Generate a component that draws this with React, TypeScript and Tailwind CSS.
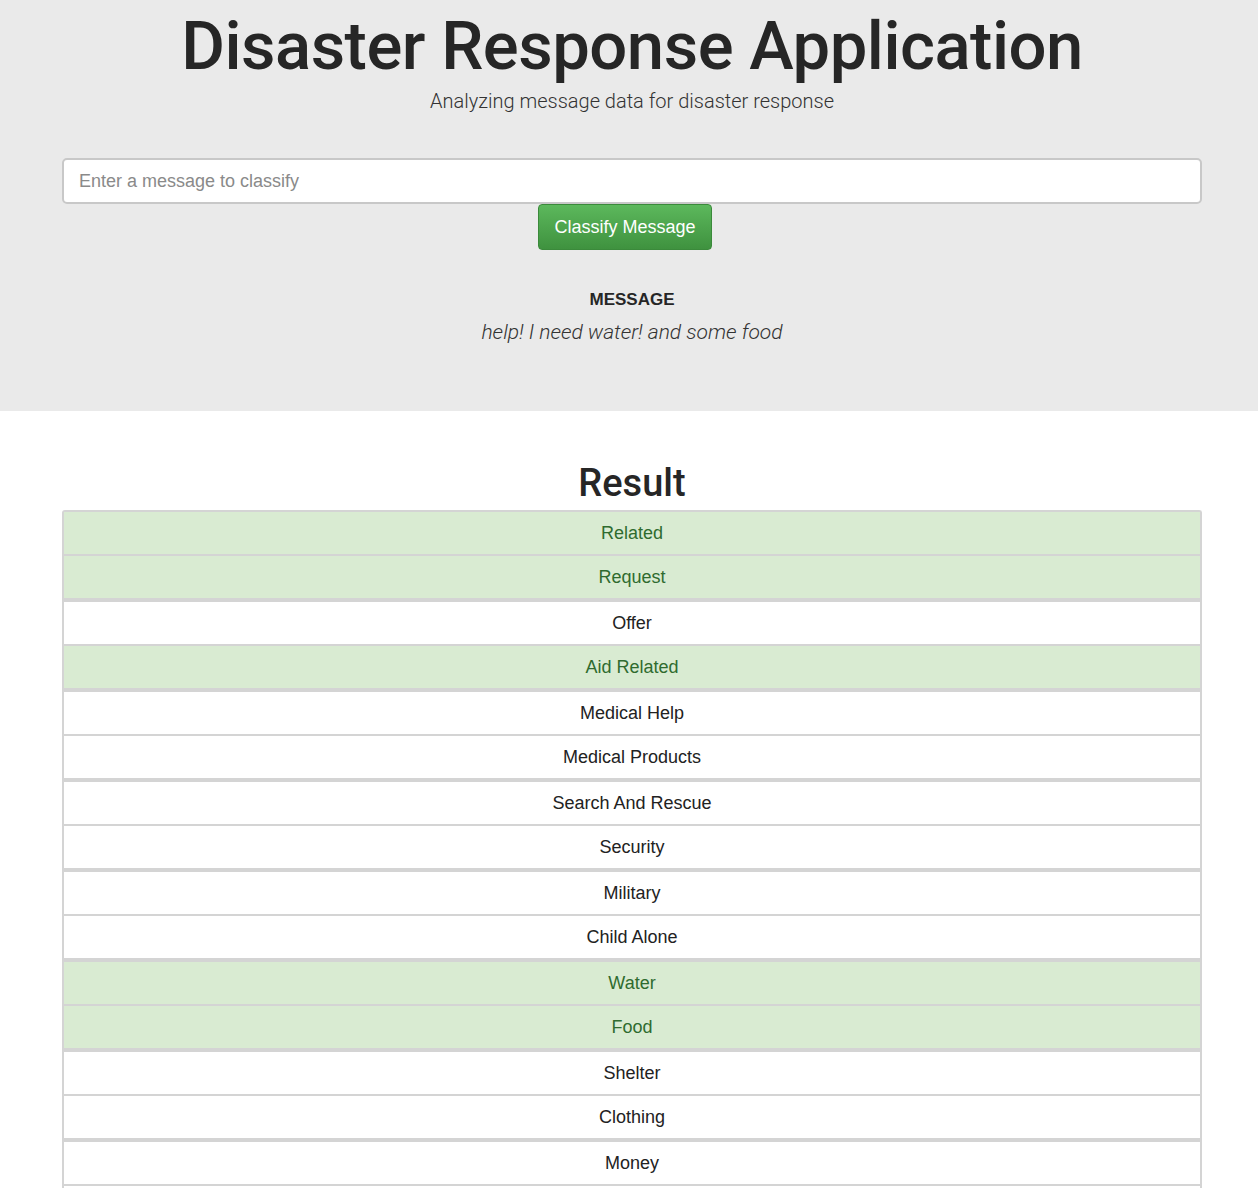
import { useState } from "react";

type Category = {
  name: string;
  hit: boolean;
};

const categories: Category[] = [
  { name: "Related", hit: true },
  { name: "Request", hit: true },
  { name: "Offer", hit: false },
  { name: "Aid Related", hit: true },
  { name: "Medical Help", hit: false },
  { name: "Medical Products", hit: false },
  { name: "Search And Rescue", hit: false },
  { name: "Security", hit: false },
  { name: "Military", hit: false },
  { name: "Child Alone", hit: false },
  { name: "Water", hit: true },
  { name: "Food", hit: true },
  { name: "Shelter", hit: false },
  { name: "Clothing", hit: false },
  { name: "Money", hit: false },
  { name: "Missing People", hit: false },
  { name: "Refugees", hit: false },
  { name: "Death", hit: false },
];

export default function App() {
  const [query, setQuery] = useState<string>("");

  return (
    <div className="min-h-screen bg-white font-['Liberation_Sans',Arial,sans-serif] text-[#262626]">
      {/* Jumbotron */}
      <div className="bg-[#eaeaea] h-[411px] pt-[8px]">
        <div className="w-[1140px] ml-[62px]">
          <h1 className="text-center text-[67px] leading-[76px] font-['Roboto',sans-serif] font-medium tracking-[-0.5px]">
            Disaster Response Application
          </h1>
          <p className="text-center text-[20px] leading-[28px] font-['Roboto',sans-serif] font-light text-[#333] mt-[3px]">
            Analyzing message data for disaster response
          </p>

          <form
            className="mt-[43px] flex flex-col items-center"
            onSubmit={(e) => e.preventDefault()}
          >
            <input
              value={query}
              onChange={(e) => setQuery(e.target.value)}
              placeholder="Enter a message to classify"
              className="w-full h-[46px] rounded-[5px] border-2 border-[#c8c8c8] bg-white px-[15px] text-[18px] placeholder:text-[#8a8a8a] outline-none"
            />
            <button
              type="submit"
              className="w-[174px] h-[46px] mr-[14px] rounded-[4px] border border-[#3b8a3b] bg-gradient-to-b from-[#5cb85c] to-[#3f923f] text-white text-[18px]"
            >
              Classify Message
            </button>
          </form>

          <div className="mt-[38px] text-center">
            <h4 className="text-[17px] font-bold leading-[24px]">MESSAGE</h4>
            <p className="mt-[5px] text-[21px] italic font-['Roboto',sans-serif] font-light text-[#333]">
              help! I need water! and some food
            </p>
          </div>
        </div>
      </div>

      {/* Result */}
      <div className="w-[1140px] ml-[62px] pt-[48px]">
        <h1 className="text-center text-[38px] leading-[48px] font-['Roboto',sans-serif] font-medium">
          Result
        </h1>
        <div className="mt-[3px] border-x-2 border-t-2 border-[#d4d4d4] rounded-t-[3px]">
          {categories.map((c, i) => (
            <div
              key={c.name}
              className={`h-[42px] box-content flex items-center justify-center text-[18px] border-[#d4d4d4] ${
                i % 2 === 0 ? "border-b-2" : "border-b-4"
              } ${c.hit ? "bg-[#d9ebd2] text-[#2f6b2f]" : "bg-white text-[#222]"}`}
            >
              {c.name}
            </div>
          ))}
        </div>
      </div>
    </div>
  );
}
